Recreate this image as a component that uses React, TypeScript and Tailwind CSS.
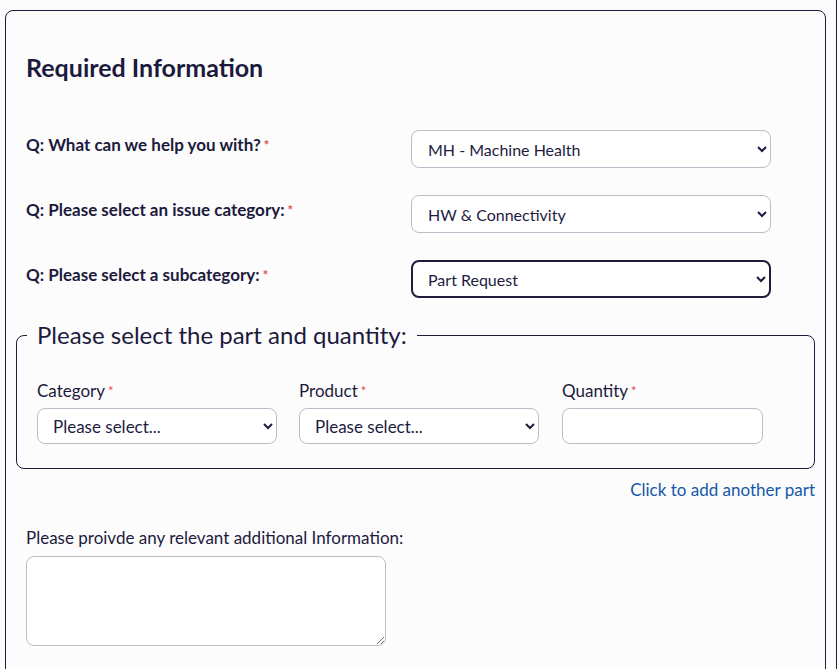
import React from 'react';

const Req = () => <span className="text-[#e5484d] text-[13px] align-top ml-[3px] relative top-[1px]">*</span>;

const selectBase =
  'w-full h-[36px] bg-white rounded-lg border border-[#bdbcc8] pl-[11px] pr-2 text-[17px] text-[#1e1c3f] outline-none';

function QuestionRow({ label, value, focused }: { label: string; value: string; focused?: boolean }) {
  return (
    <div className="flex items-start">
      <label className="w-[385px] pt-[4px] font-bold text-[17px] leading-[21px]">
        {label}
        <Req />
      </label>
      <select
        aria-label={label}
        defaultValue={value}
        className={
          focused
            ? 'w-[360px] h-[38px] bg-white rounded-lg border-2 border-[#1e1c3f] pl-[11px] pr-2 text-[16px] text-[#1e1c3f] outline-none'
            : 'w-[360px] h-[38px] bg-white rounded-lg border border-[#bdbcc8] pl-[12px] pr-2 text-[16px] text-[#1e1c3f] outline-none'
        }
      >
        <option>{value}</option>
      </select>
    </div>
  );
}

export default function App() {
  return (
    <div className="min-h-[669px] w-[840px] bg-[#fcfcfd] text-[#1c1a3c] font-['Lato',sans-serif] overflow-hidden">
      <div className="w-[837px] min-h-[669px] border-r border-[#1e1c3f] pt-[10px] pl-[5px]">
        <div className="w-[821px] min-h-[700px] border border-[#1e1c3f] rounded-lg px-[10px] pt-[41px]">
          <h2 className="px-[10px] text-[25px] font-bold leading-[30px]">Required Information</h2>

          <div className="px-[10px] mt-[48px] flex flex-col gap-[27px]">
            <QuestionRow label="Q: What can we help you with?" value="MH - Machine Health" />
            <QuestionRow label="Q: Please select an issue category:" value="HW & Connectivity" />
            <QuestionRow label="Q: Please select a subcategory:" value="Part Request" focused />
          </div>

          <fieldset className="mt-[22px] border border-[#1e1c3f] rounded-lg px-[10px] pb-[24px]">
            <legend className="px-[10px] text-[24px] leading-[30px]">Please select the part and quantity:</legend>
            <div className="px-[10px] mt-[30px] flex gap-[22px]">
              <div className="w-[240px]">
                <label className="block text-[17px] leading-[21px] mb-[7px]">
                  Category
                  <Req />
                </label>
                <select aria-label="Category" className={selectBase}>
                  <option>Please select...</option>
                </select>
              </div>
              <div className="w-[240px]">
                <label className="block text-[17px] leading-[21px] mb-[7px]">
                  Product
                  <Req />
                </label>
                <select aria-label="Product" className={selectBase}>
                  <option>Please select...</option>
                </select>
              </div>
              <div className="w-[201px] ml-[1px]">
                <label className="block text-[17px] leading-[21px] mb-[7px]">
                  Quantity
                  <Req />
                </label>
                <input
                  aria-label="Quantity"
                  className="w-full h-[36px] bg-white rounded-lg border border-[#bdbcc8] px-3 text-[17px] outline-none"
                />
              </div>
            </div>
          </fieldset>

          <div className="flex justify-end mt-[10px]">
            <a href="#" className="text-[17px] leading-[21px] text-[#1459a8]">
              Click to add another part
            </a>
          </div>

          <div className="px-[10px] mt-[27px]">
            <label className="block text-[17px] leading-[21px] mb-[8px]">
              Please proivde any relevant additional Information:
            </label>
            <textarea
              aria-label="Additional information"
              className="block w-[360px] h-[90px] bg-white rounded-lg border border-[#bdbcc8] p-2 text-[16px] outline-none"
            />
          </div>
        </div>
      </div>
    </div>
  );
}
